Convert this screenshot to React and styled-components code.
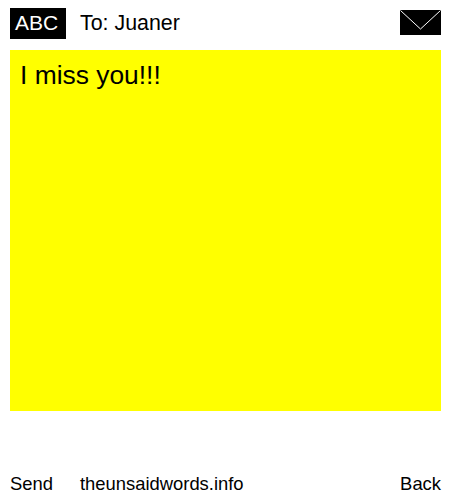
import React from "react";
import styled, { createGlobalStyle } from "styled-components";

const GlobalStyle = createGlobalStyle`
  html, body {
    margin: 0;
    padding: 0;
    background: #fff;
  }
`;

const Page = styled.div`
  width: 450px;
  height: 500px;
  box-sizing: border-box;
  padding: 8px 9px 0 10px;
  display: flex;
  flex-direction: column;
  font-family: "Liberation Sans", Arial, sans-serif;
  color: #000;
`;

const Header = styled.div`
  height: 31px;
  display: flex;
  align-items: center;
`;

const Badge = styled.div`
  width: 56px;
  height: 31px;
  box-sizing: border-box;
  padding-left: 5px;
  background: #000;
  color: #fff;
  font-size: 21px;
  line-height: 30px;
`;

const Recipient = styled.div`
  margin-left: 14px;
  font-size: 21.4px;
  line-height: 31px;
  flex: 1;
`;

const Envelope = styled.svg`
  display: block;
  width: 41px;
  height: 25px;
  margin-top: -2px;
`;

const Note = styled.div`
  margin-top: 11px;
  height: 361px;
  box-sizing: border-box;
  padding: 9px 10px;
  background: #ff0;
  font-size: 26.4px;
  line-height: 32px;
`;

const Footer = styled.div`
  margin-top: 61px;
  display: flex;
  font-size: 18.4px;
  line-height: 24px;
`;

const SendLink = styled.span`
  width: 70px;
`;

const SiteLink = styled.span`
  flex: 1;
`;

export default function App() {
  return (
    <>
      <GlobalStyle />
      <Page>
        <Header>
          <Badge>ABC</Badge>
          <Recipient>To: Juaner</Recipient>
          <Envelope viewBox="0 0 41 25">
            <rect width="41" height="25" fill="#000" />
            <path d="M0.5 0.5 L20.5 19 L40.5 0.5" fill="none" stroke="#fff" strokeWidth="1" />
          </Envelope>
        </Header>
        <Note>I miss you!!!</Note>
        <Footer>
          <SendLink>Send</SendLink>
          <SiteLink>theunsaidwords.info</SiteLink>
          <span>Back</span>
        </Footer>
      </Page>
    </>
  );
}
